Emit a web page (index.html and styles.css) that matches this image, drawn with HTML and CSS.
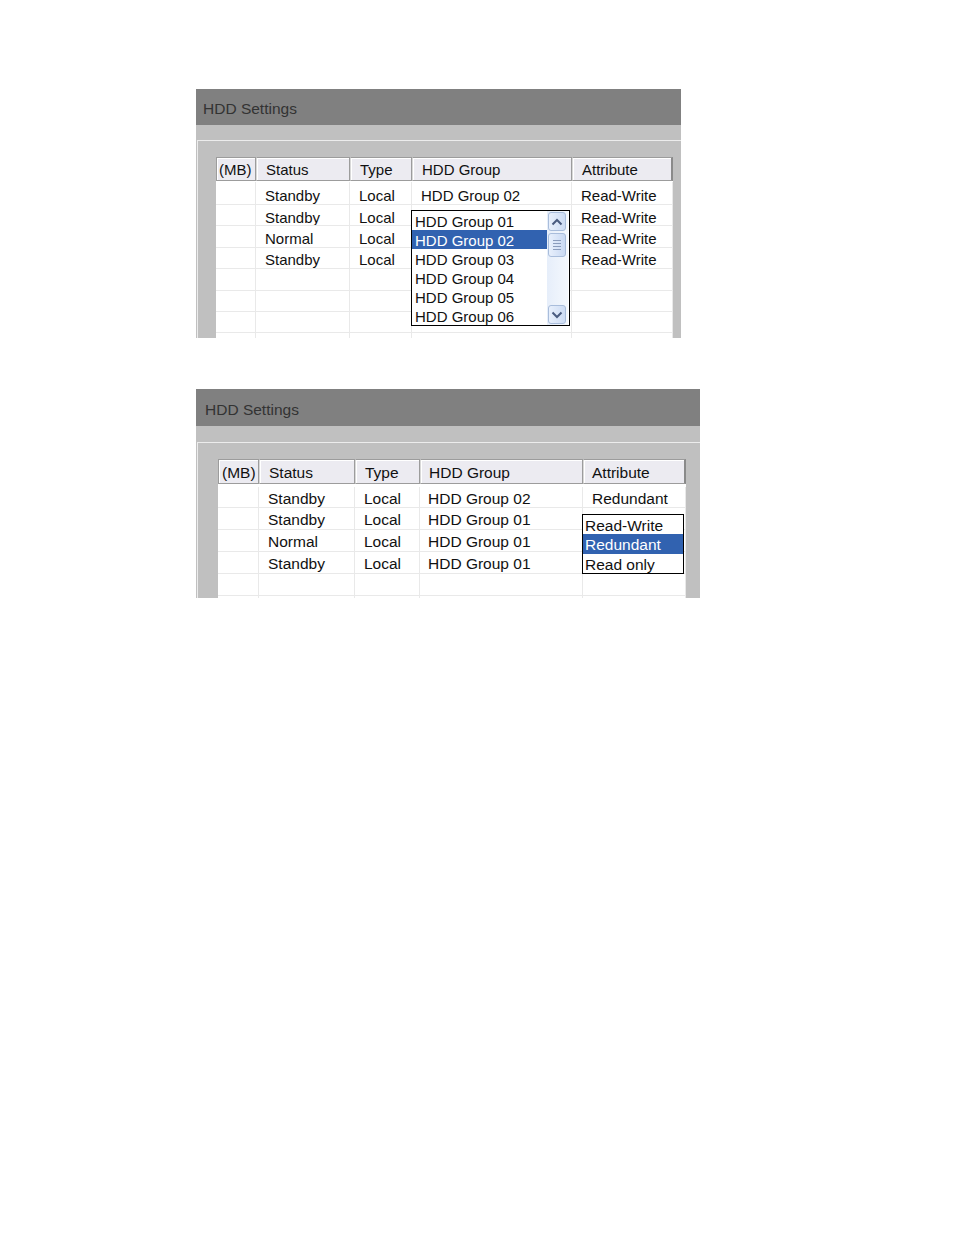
FILE: index.html
```html
<!DOCTYPE html>
<html>
<head>
<meta charset="utf-8">
<link rel="stylesheet" href="styles.css">
</head>
<body>
<div class="panel p1">
  <div class="title">HDD Settings</div>
  <div class="band"></div>
  <div class="body">
    <div class="grid">
      <div class="row head"><div class="c mb">(MB)</div><div class="c">Status</div><div class="c">Type</div><div class="c">HDD Group</div><div class="c">Attribute</div></div>
      <div class="row first"><div class="c mb"></div><div class="c">Standby</div><div class="c">Local</div><div class="c">HDD Group 02</div><div class="c">Read-Write</div></div>
      <div class="row"><div class="c mb"></div><div class="c">Standby</div><div class="c">Local</div><div class="c"></div><div class="c">Read-Write</div></div>
      <div class="row"><div class="c mb"></div><div class="c">Normal</div><div class="c">Local</div><div class="c"></div><div class="c">Read-Write</div></div>
      <div class="row"><div class="c mb"></div><div class="c">Standby</div><div class="c">Local</div><div class="c"></div><div class="c">Read-Write</div></div>
      <div class="row"><div class="c mb"></div><div class="c"></div><div class="c"></div><div class="c"></div><div class="c"></div></div>
      <div class="row"><div class="c mb"></div><div class="c"></div><div class="c"></div><div class="c"></div><div class="c"></div></div>
      <div class="row"><div class="c mb"></div><div class="c"></div><div class="c"></div><div class="c"></div><div class="c"></div></div>
      <div class="row"><div class="c mb"></div><div class="c"></div><div class="c"></div><div class="c"></div><div class="c"></div></div>

      <div class="drop d1">
        <div class="list">
          <div class="item">HDD Group 01</div>
          <div class="item sel">HDD Group 02</div>
          <div class="item">HDD Group 03</div>
          <div class="item">HDD Group 04</div>
          <div class="item">HDD Group 05</div>
          <div class="item">HDD Group 06</div>
        </div>
        <div class="sb">
          <div class="btn"><svg width="12" height="8" viewBox="0 0 12 8"><path d="M1.5 6.5 L6 2 L10.5 6.5" fill="none" stroke="#4a5c80" stroke-width="2"/></svg></div>
          <div class="thumb"><span></span><span></span><span></span><span></span></div>
          <div class="track"></div>
          <div class="btn"><svg width="12" height="8" viewBox="0 0 12 8"><path d="M1.5 1.5 L6 6 L10.5 1.5" fill="none" stroke="#4a5c80" stroke-width="2"/></svg></div>
        </div>
      </div>
    </div>
  </div>
</div>

<div class="panel p2">
  <div class="title">HDD Settings</div>
  <div class="band"></div>
  <div class="body">
    <div class="grid">
      <div class="row head"><div class="c mb">(MB)</div><div class="c">Status</div><div class="c">Type</div><div class="c">HDD Group</div><div class="c">Attribute</div></div>
      <div class="row first"><div class="c mb"></div><div class="c">Standby</div><div class="c">Local</div><div class="c">HDD Group 02</div><div class="c attr1">Redundant</div></div>
      <div class="row"><div class="c mb"></div><div class="c">Standby</div><div class="c">Local</div><div class="c">HDD Group 01</div><div class="c"></div></div>
      <div class="row"><div class="c mb"></div><div class="c">Normal</div><div class="c">Local</div><div class="c">HDD Group 01</div><div class="c"></div></div>
      <div class="row"><div class="c mb"></div><div class="c">Standby</div><div class="c">Local</div><div class="c">HDD Group 01</div><div class="c"></div></div>
      <div class="row"><div class="c mb"></div><div class="c"></div><div class="c"></div><div class="c"></div><div class="c"></div></div>
      <div class="row"><div class="c mb"></div><div class="c"></div><div class="c"></div><div class="c"></div><div class="c"></div></div>

      <div class="drop d2">
        <div class="list">
          <div class="item">Read-Write</div>
          <div class="item sel">Redundant</div>
          <div class="item">Read only</div>
        </div>
      </div>
    </div>
  </div>
</div>
</body>
</html>
```

FILE: styles.css
```css
html, body {
  margin: 0;
  padding: 0;
  background: #ffffff;
}
body {
  font-family: "Liberation Sans", Arial, sans-serif;
  color: #111;
  padding-top: 89px;
}
.panel {
  margin-left: 196px;
  overflow: hidden;
  background: #c0c0c0;
  display: flex;
  flex-direction: column;
}
.p1 {
  width: 485px;
  height: 249px;
  font-size: 15px;
}
.p2 {
  width: 504px;
  height: 209px;
  margin-top: 51px;
  font-size: 15.5px;
}
.title {
  background: #808080;
  color: #333;
  font-size: 15.5px;
  flex: none;
}
.p1 .title {
  height: 36px;
  line-height: 40px;
  padding-left: 7px;
}
.p2 .title {
  height: 37px;
  line-height: 42px;
  padding-left: 9px;
}
.band {
  background: #c0c0c0;
  flex: none;
}
.p1 .band { height: 15px; }
.p2 .band { height: 16px; }
.body {
  flex: 1;
  margin-left: 1px;
  border-top: 1px solid #ececec;
  border-left: 1px solid #ececec;
  background: #c0c0c0;
}
.p1 .body {
  padding: 16px 0 0 18px;
}
.p2 .body {
  padding: 16px 0 0 20px;
}
.grid {
  position: relative;
  background: #ffffff;
  height: 100%;
}
.p1 .grid { width: 457px; }
.p2 .grid { width: 468px; }
.row {
  display: grid;
  box-sizing: border-box;
  border-bottom: 1px solid #e9e9e9;
}
.p1 .row { grid-template-columns: 40px 94px 62px 160px 101px; height: 21.4px; }
.p2 .row { grid-template-columns: 41px 96px 65px 163px 103px; height: 22px; }
.p1 .row.head { height: 24px; }
.p2 .row.head { height: 25px; }
.p1 .row.first { height: 24px; padding-top: 1px; }
.p2 .row.first { height: 24px; padding-top: 3px; }
.c {
  box-sizing: border-box;
  border-right: 1px solid #e9e9e9;
  padding-left: 9px;
  white-space: nowrap;
  overflow: hidden;
  display: flex;
  align-items: center;
}
.p1 .c { padding-top: 4px; }
.p2 .c { padding-top: 3px; }
.p2 .c:nth-child(4), .p2 .c:nth-child(5) { padding-left: 8px; }
.p2 .c.attr1 { padding-left: 9px; }
.c.mb { padding-left: 2px; }
.p2 .c.mb { padding-left: 3px; }
.row.head {
  border-bottom: none;
}
.row.head .c {
  background: #ecebf1;
  border: 1px solid #9c9c9c;
  border-left-color: #d8d8d8;
  box-shadow: inset 1px 1px 0 #ffffff;
}
.p1 .row.head .c { padding-top: 1px; }
.p2 .row.head .c { padding-top: 2px; }
.row.head .c:last-child {
  border-right: 2px solid #8a8a8a;
}
.row.head .c:first-child {
  border-left-color: #9c9c9c;
}
.drop {
  position: absolute;
  background: #ffffff;
  border: 1px solid #000;
  display: flex;
  box-sizing: border-box;
}
.d1 {
  left: 195px;
  top: 53px;
  width: 159px;
  height: 116px;
}
.d2 {
  left: 364px;
  top: 55px;
  width: 102px;
  height: 60px;
}
.list {
  flex: 1;
  display: flex;
  flex-direction: column;
}
.item {
  height: 19px;
  line-height: 21px;
  padding-left: 3px;
  white-space: nowrap;
  overflow: hidden;
}
.d2 .item {
  height: 19.33px;
  line-height: 21px;
  padding-left: 2px;
}
.item.sel {
  background: #3162b0;
  color: #ffffff;
}
.sb {
  width: 20px;
  flex: none;
  display: flex;
  flex-direction: column;
  align-items: center;
  padding: 1px 1px 1px 0;
  background: linear-gradient(to right, #e6eefa, #f4f8fd);
  margin-right: 1px;
}
.btn {
  width: 18px;
  height: 19px;
  box-sizing: border-box;
  border: 1px solid #a9bddb;
  border-radius: 3px;
  background: linear-gradient(to right, #e8f0fc, #cddcf4);
  display: flex;
  align-items: center;
  justify-content: center;
  flex: none;
}
.thumb {
  margin-top: 2px;
  width: 18px;
  height: 24px;
  box-sizing: border-box;
  border: 1px solid #a9bddb;
  border-radius: 3px;
  background: linear-gradient(to right, #e8f0fc, #c9d9f3);
  display: flex;
  flex-direction: column;
  align-items: center;
  justify-content: center;
  gap: 2px;
  flex: none;
}
.thumb span {
  display: block;
  width: 8px;
  height: 1px;
  background: #8a9cbc;
}
.track {
  flex: 1;
}
```
